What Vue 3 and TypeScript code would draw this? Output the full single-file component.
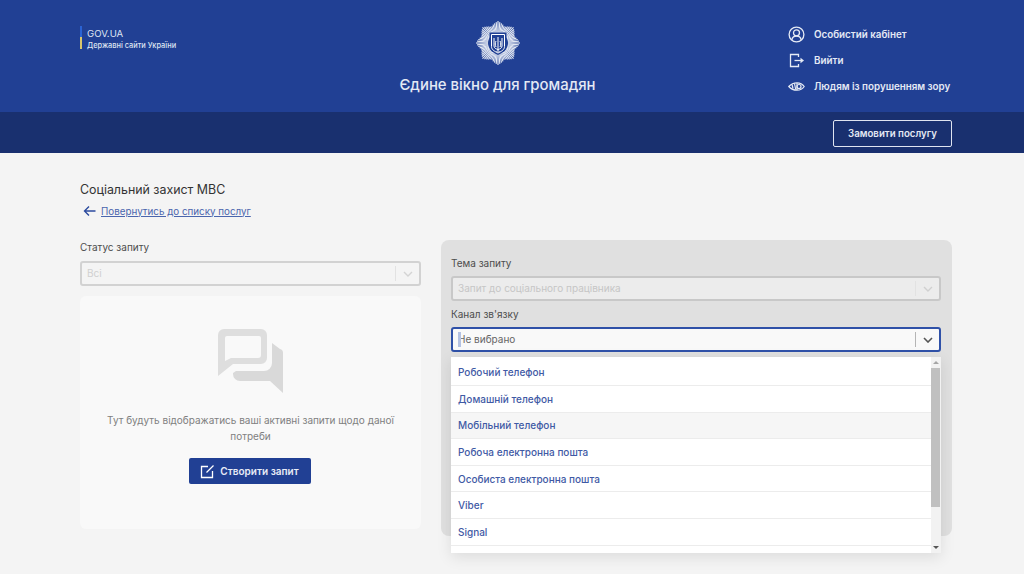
<script setup lang="ts">
const options = [
  "Робочий телефон",
  "Домашній телефон",
  "Мобільний телефон",
  "Робоча електронна пошта",
  "Особиста електронна пошта",
  "Viber",
  "Signal",
];
const rays = Array.from({ length: 72 }, (_, i) => i * 5);

// eight long points, shorter rays between them
const rayEnd = (a: number) => {
  const d = Math.abs(((a + 22.5) % 45) - 22.5);
  return 1 + d * 0.2;
};
</script>

<template>
  <div class="page">
    <header class="top">
      <div class="gov">
        <span class="flag"></span>
        <div>
          <div class="gov-name">GOV.UA</div>
          <div class="gov-sub">Державні сайти України</div>
        </div>
      </div>

      <div class="brand">
        <svg class="emblem" width="46" height="46" viewBox="0 0 46 46">
          <g stroke="#e3e8f3" stroke-width="1.15">
            <line
              v-for="a in rays"
              :key="a"
              x1="23"
              y1="13"
              x2="23"
              :y2="rayEnd(a)"
              :transform="`rotate(${a} 23 23)`"
            />
          </g>
          <path d="M14.500 12.500h17v14c0 4.500-4.500 6.500-8.500 8.500-4-2-8.500-4-8.500-8.500z" fill="#214094" />
          <path d="M16.500 14.500h13v12c0 3.500-3.500 5-6.500 6.500-3-1.500-6.500-3-6.500-6.500z" fill="none" stroke="#fff" stroke-width="1" />
          <path
            d="M23 17v13.500M23 30.500l-1.500 1.500M23 30.500l1.500 1.500M19 18v8c0 2 2 3 4 3.500M27 18v8c0 2-2 3-4 3.500M21 21c-1 2-1 4 0 6M25 21c1 2 1 4 0 6"
            fill="none"
            stroke="#fff"
            stroke-width="1"
          />
        </svg>
        <div class="brand-title">Єдине вікно для громадян</div>
      </div>

      <nav class="user-nav">
        <a class="nav-item">
          <svg width="17" height="17" viewBox="0 0 17 17" fill="none" stroke="#e6ebf5" stroke-width="1.3">
            <circle cx="8.500" cy="8.500" r="7.400" />
            <circle cx="8.500" cy="6.800" r="3" />
            <path d="M3.800 14c.4-2.300 2.300-4 4.700-4s4.300 1.700 4.700 4" />
          </svg>
          <span>Особистий кабінет</span>
        </a>
        <a class="nav-item">
          <svg width="17" height="17" viewBox="0 0 17 17" fill="none" stroke="#e6ebf5" stroke-width="1.3">
            <path d="M10.500 5V2.500H2.500v12h8V12" />
            <path d="M6.500 8.500h6.500" />
            <path d="M12.500 5.800l3.500 2.700-3.500 2.700z" fill="#e6ebf5" stroke="none" />
          </svg>
          <span>Вийти</span>
        </a>
        <a class="nav-item">
          <svg width="17" height="17" viewBox="0 0 17 17" fill="none" stroke="#e6ebf5" stroke-width="1.200">
            <path d="M.8 8.500C3 6 5.500 4.800 9 4.800s5.500 1.200 7.200 3.700C14.500 11 12.500 12.200 9 12.200S3 11 .8 8.500z" />
            <circle cx="11" cy="8.500" r="2" />
            <path d="M4 6.500l1 4M6.500 5.500l1.200 6M9 5v7" />
          </svg>
          <span>Людям із порушенням зору</span>
        </a>
      </nav>
    </header>

    <div class="subbar">
      <button class="order-btn">Замовити послугу</button>
    </div>

    <main class="content">
      <h1 class="title">Соціальний захист МВС</h1>
      <a class="back">
        <svg width="13" height="12" viewBox="0 0 13 12" fill="none" stroke="#2b4a9e" stroke-width="1.4">
          <path d="M12.500 6H1.500M6 1.500L1.500 6 6 10.500" />
        </svg>
        <span>Повернутись до списку послуг</span>
      </a>

      <div class="columns">
        <section class="left">
          <label class="label">Статус запиту</label>
          <div class="select disabled">
            <span class="select-value">Всі</span>
            <span class="select-sep"></span>
            <svg class="chev" width="10" height="6" viewBox="0 0 10 6" fill="none" stroke="#d4d4d4" stroke-width="1.4">
              <path d="M1 1l4 4 4-4" />
            </svg>
          </div>

          <div class="empty">
            <svg width="66" height="64" viewBox="0 0 66 64">
              <path
                fill-rule="evenodd"
                d="M6 0h37a6 6 0 0 1 6 6v23a6 6 0 0 1-6 6H15L0 47V6a6 6 0 0 1 6-6zM9 7a2 2 0 0 0-2 2v23l6-3h27a3 3 0 0 0 3-3V9a2 2 0 0 0-2-2z"
                fill="#dedede"
              />
              <path
                d="M54 14l8 6a4 4 0 0 1 3 4v40L52 52H22a7 7 0 0 1-7-7v-1l3-2h28a8 8 0 0 0 8-8z"
                fill="#d9d9d9"
              />
            </svg>
            <p class="empty-text">Тут будуть відображатись ваші активні запити щодо даної потреби</p>
            <button class="create-btn">
              <svg width="15" height="15" viewBox="0 0 15 15" fill="none" stroke="#fff" stroke-width="1.300">
                <path d="M8 2.500H1.500v11h11V7" />
                <path d="M6.500 8.500L13.500 1.500" />
              </svg>
              <span>Створити запит</span>
            </button>
          </div>
        </section>

        <section class="right">
          <label class="label">Тема запиту</label>
          <div class="select disabled dim">
            <span class="select-value">Запит до соціального працівника</span>
            <span class="select-sep"></span>
            <svg class="chev" width="10" height="6" viewBox="0 0 10 6" fill="none" stroke="#d0d0d0" stroke-width="1.4">
              <path d="M1 1l4 4 4-4" />
            </svg>
          </div>

          <label class="label second">Канал зв'язку</label>
          <div class="select focused">
            <span class="caret"></span>
            <span class="select-value">Не вибрано</span>
            <span class="select-sep"></span>
            <svg class="chev" width="10" height="6" viewBox="0 0 10 6" fill="none" stroke="#555" stroke-width="1.600">
              <path d="M1 1l4 4 4-4" />
            </svg>
          </div>

          <div class="menu">
            <ul class="options">
              <li v-for="(o, i) in options" :key="o" :class="{ hovered: i === 2 }">{{ o }}</li>
            </ul>
            <div class="scroll">
              <span class="arrow up"></span>
              <span class="thumb"></span>
              <span class="arrow down"></span>
            </div>
          </div>
        </section>
      </div>
    </main>
  </div>
</template>

<style>
html,
body {
  margin: 0;
  background: #f4f4f4;
  overflow: hidden;
}
</style>

<style scoped>
.page {
  height: 574px;
  overflow: hidden;
  font-family: Inter, "Liberation Sans", sans-serif;
  color: #333;
}

.top {
  height: 112px;
  background: #214094;
  padding: 0 72px 0 80px;
  display: grid;
  grid-template-columns: 320px 195px 1fr;
  box-sizing: border-box;
}

.gov {
  display: flex;
  gap: 5px;
  align-items: flex-start;
  padding-top: 26px;
}

.flag {
  width: 2px;
  height: 23px;
  background: linear-gradient(#2a63d4 50%, #d8c66c 50%);
}

.gov-name {
  font-size: 9.6px;
  line-height: 13px;
  margin-top: 1px;
  color: #dfe5f2;
}

.gov-sub {
  font-size: 7.4px;
  line-height: 11px;
  font-weight: 500;
  color: #dfe5f2;
}

.brand {
  display: flex;
  flex-direction: column;
  align-items: center;
  padding-top: 20px;
}

.emblem {
  display: block;
}

.brand-title {
  margin-top: 9px;
  font-size: 14.9px;
  line-height: 20px;
  font-weight: 500;
  color: #e4e9f4;
  white-space: nowrap;
}

.user-nav {
  justify-self: end;
  width: 164px;
  padding-top: 26px;
  display: flex;
  flex-direction: column;
  gap: 9.200px;
}

.nav-item {
  display: flex;
  align-items: center;
  gap: 9px;
  height: 17px;
  font-size: 9.800px;
  font-weight: 600;
  color: #e4e9f4;
  white-space: nowrap;
}

.nav-item svg {
  flex: none;
}

.subbar {
  height: 41px;
  background: #19306f;
  padding: 8px 72px 0 0;
  box-sizing: border-box;
  display: flex;
  justify-content: flex-end;
  align-items: flex-start;
}

.order-btn {
  width: 119px;
  height: 27px;
  padding: 0;
  border: 1.500px solid #dfe4f0;
  border-radius: 2px;
  background: transparent;
  color: #e4e9f4;
  font: 600 9.700px Inter, sans-serif;
}

.content {
  padding: 29px 72px 0 80px;
}

.title {
  margin: 0;
  font-size: 12.400px;
  line-height: 16px;
  font-weight: 400;
  color: #333;
}

.back {
  display: flex;
  align-items: center;
  gap: 5px;
  margin-top: 5px;
  margin-left: 3px;
  height: 16px;
  font-size: 9.800px;
  color: #4a65ad;
  text-decoration: underline;
}

.columns {
  display: flex;
  gap: 20px;
  margin-top: 21px;
}

.left {
  width: 341px;
  padding-top: 1px;
}

.right {
  position: relative;
  width: 511px;
  height: 296px;
  padding: 17px 11px 0 10px;
  box-sizing: border-box;
  background: #e0e0e0;
  border-radius: 8px;
}

.label {
  display: block;
  height: 13px;
  font-size: 10px;
  line-height: 13px;
  color: #4d4d4d;
}

.second {
  margin-top: 7px;
}

.select {
  position: relative;
  display: flex;
  align-items: center;
  height: 25px;
  margin-top: 7px;
  padding: 0 5px;
  box-sizing: border-box;
  border: 2px solid #d2d2d2;
  border-radius: 3px;
  background: #f4f4f4;
}

.select.dim {
  background: #ececec;
  border-color: #c8c8c8;
  margin-top: 6px;
}

.select-value {
  flex: 1;
  font-size: 10px;
  padding-bottom: 2px;
  color: #d0d0d0;
}

.select.dim .select-value {
  color: #c6c6c6;
}

.select-sep {
  width: 1px;
  height: 15px;
  background: #e2e2e2;
  margin-right: 7px;
}

.chev {
  flex: none;
  margin-right: 1px;
}

.focused {
  background: #f9f9f9;
  border-color: #2f51a8;
  margin-top: 6px;
}

.focused .select-value {
  color: #666;
}

.focused .select-sep {
  background: #b5b5b5;
}

.caret {
  position: absolute;
  left: 5px;
  top: 3px;
  width: 3px;
  height: 15px;
  background: #b4c2e2;
}

.empty {
  margin-top: 10px;
  height: 233px;
  padding-top: 33px;
  box-sizing: border-box;
  background: #f9f9f9;
  border-radius: 6px;
  display: flex;
  flex-direction: column;
  align-items: center;
}

.empty-text {
  margin: 19px 0 0;
  width: 300px;
  font-size: 10px;
  line-height: 16px;
  text-align: center;
  color: #808080;
}

.create-btn {
  display: flex;
  align-items: center;
  justify-content: center;
  gap: 5px;
  width: 122px;
  height: 26px;
  margin: 14px 2px 0 0;
  padding: 0;
  border: 0;
  border-radius: 2px;
  background: #214094;
  color: #e8ecf6;
  font: 600 10px Inter, sans-serif;
}

.menu {
  position: absolute;
  left: 10px;
  top: 117px;
  width: 490px;
  height: 196px;
  display: flex;
  background: #fff;
  box-shadow: 0 4px 14px rgba(0, 0, 0, 0.1);
}

.options {
  flex: 1;
  margin: 0;
  padding: 2.500px 0 0;
  list-style: none;
}

.options li {
  height: 26.600px;
  padding-left: 7px;
  box-sizing: border-box;
  display: flex;
  align-items: center;
  font-size: 10px;
  font-weight: 500;
  color: #3f5aa5;
  border-bottom: 1px solid #ececec;
}

.options li.hovered {
  background: #f6f6f6;
}

.scroll {
  position: relative;
  width: 10px;
  background: #f2f2f2;
}

.thumb {
  position: absolute;
  left: 0;
  top: 11px;
  width: 9px;
  height: 139px;
  background: #c0c0c0;
}

.arrow {
  position: absolute;
  left: 2px;
  border-left: 3px solid transparent;
  border-right: 3px solid transparent;
}

.arrow.up {
  top: 4px;
  border-bottom: 3px solid #a5a5a5;
}

.arrow.down {
  bottom: 4px;
  border-top: 3px solid #555;
}
</style>
